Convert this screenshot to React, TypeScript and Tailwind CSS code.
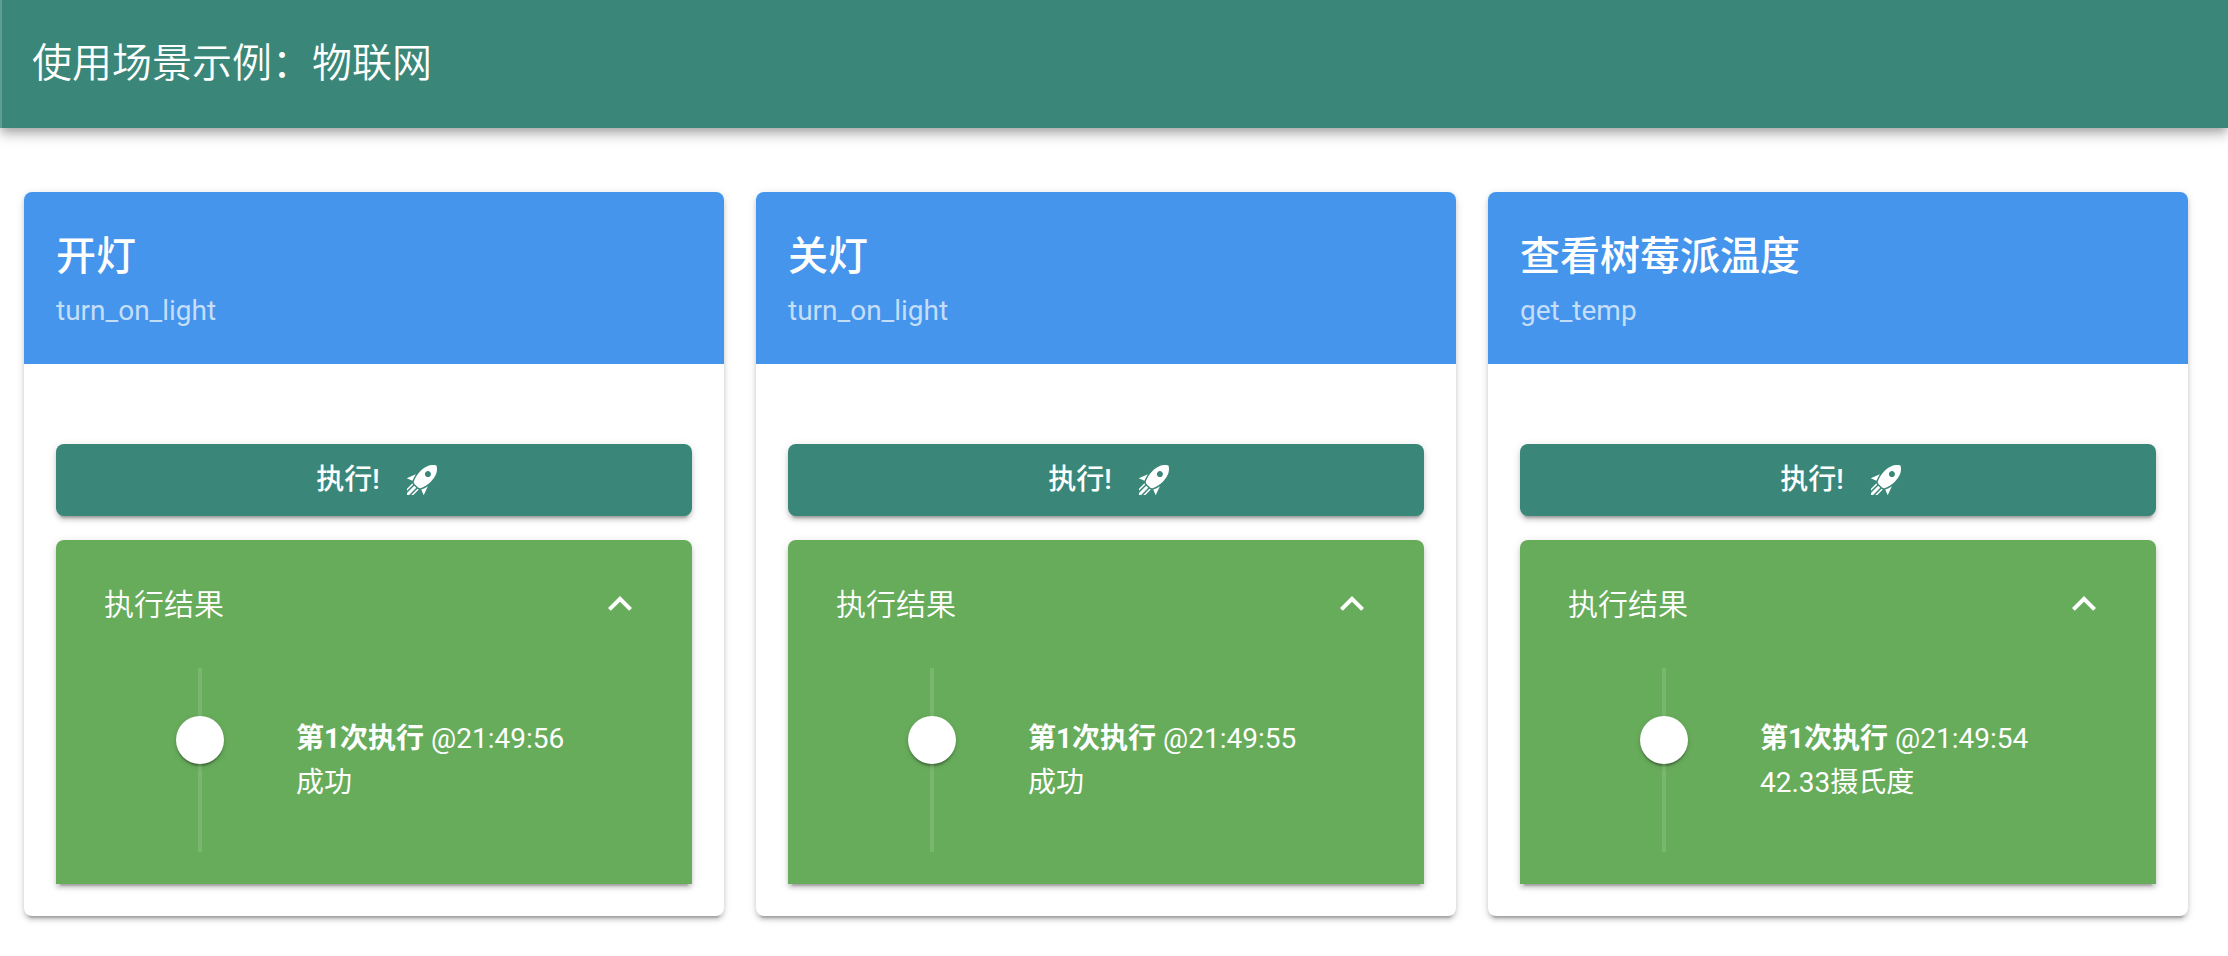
import { useState } from "react";

type Run = { time: string; output: string };
type Device = { title: string; action: string; run: Run };

const devices: Device[] = [
  { title: "开灯", action: "turn_on_light", run: { time: "21:49:56", output: "成功" } },
  { title: "关灯", action: "turn_on_light", run: { time: "21:49:55", output: "成功" } },
  { title: "查看树莓派温度", action: "get_temp", run: { time: "21:49:54", output: "42.33摄氏度" } },
];

function RocketIcon() {
  return (
    <svg viewBox="0 0 24 24" className="-mr-2 size-9 fill-current" aria-hidden="true">
      <path d="M13.13 22.19L11.5 18.36C13.07 17.78 14.54 17 15.9 16.09L13.13 22.19M5.64 12.5L1.81 10.87L7.91 8.1C7 9.46 6.22 10.93 5.64 12.5M21.61 2.39C21.61 2.39 16.66 .269 11 5.93C8.81 8.12 7.5 10.53 6.65 12.64C6.37 13.39 6.56 14.21 7.11 14.77L9.24 16.89C9.79 17.45 10.61 17.63 11.36 17.35C13.5 16.53 15.88 15.19 18.07 13C23.73 7.34 21.61 2.39 21.61 2.39M14.54 9.46C13.76 8.68 13.76 7.41 14.54 6.63S16.59 5.85 17.37 6.63C18.14 7.41 18.15 8.68 17.37 9.46C16.59 10.24 15.32 10.24 14.54 9.46M8.88 16.53L7.47 15.12L8.88 16.53M6.24 22L9.88 18.36C9.54 18.27 9.21 18.12 8.91 17.91L4.83 22H6.24M2 22H3.41L8.18 17.24L6.76 15.83L2 20.59V22M2 19.17L6.09 15.09C5.88 14.79 5.73 14.47 5.64 14.12L2 17.76V19.17Z" />
    </svg>
  );
}

function ChevronIcon({ open }: { open: boolean }) {
  return (
    <svg viewBox="0 0 24 24" className={open ? "size-12 rotate-180 fill-current" : "size-12 fill-current"} aria-hidden="true">
      <path d="M7.41,8.58L12,13.17L16.59,8.58L18,10L12,16L6,10L7.41,8.58Z" />
    </svg>
  );
}

function Results({ run }: { run: Run }) {
  const [open, setOpen] = useState(true);
  return (
    <section className="mt-6 rounded-t-lg bg-[#67ac5b] text-white shadow-[0_6px_2px_-4px_rgba(0,0,0,0.2),0_4px_4px_0_rgba(0,0,0,0.14),0_2px_10px_0_rgba(0,0,0,0.12)]">
      <button
        type="button"
        aria-expanded={open}
        onClick={() => setOpen(!open)}
        className="flex h-32 w-full items-center justify-between px-12 text-[30px] font-[350]"
      >
        执行结果
        <ChevronIcon open={open} />
      </button>
      {open && (
        <div className="px-12 pb-8">
          <ol>
            <li className="flex">
              <div className="flex w-48 flex-col items-center">
                <span className="h-12 w-1 bg-white/12" />
                <span className="size-12 rounded-full bg-white shadow-[0_4px_2px_-2px_rgba(0,0,0,0.2),0_2px_2px_0_rgba(0,0,0,0.14),0_2px_6px_0_rgba(0,0,0,0.12)]" />
                <span className="w-1 grow bg-white/12" />
              </div>
              <div className="pt-[49px] pb-[47px] text-[28px] leading-11">
                <p>
                  <strong className="font-bold">第1次执行</strong> @{run.time}
                </p>
                <p>{run.output}</p>
              </div>
            </li>
          </ol>
        </div>
      )}
    </section>
  );
}

function DeviceCard({ device }: { device: Device }) {
  return (
    <article className="rounded-lg bg-white shadow-[0_6px_2px_-4px_rgba(0,0,0,0.2),0_4px_4px_0_rgba(0,0,0,0.14),0_2px_10px_0_rgba(0,0,0,0.12)]">
      <header className="rounded-t-lg bg-[#4595ec] px-8 pt-[33px] pb-[31px] text-white">
        <h2 className="text-[40px] leading-16 font-medium">{device.title}</h2>
        <p className="text-[28px] leading-11 text-white/70">{device.action}</p>
      </header>
      <div className="px-8 pt-20 pb-8">
        <button
          type="button"
          className="flex h-18 w-full items-center justify-center gap-6 rounded-lg bg-[#3a8779] text-[28px] font-medium text-white shadow-[0_6px_2px_-4px_rgba(0,0,0,0.2),0_4px_4px_0_rgba(0,0,0,0.14),0_2px_10px_0_rgba(0,0,0,0.12)]"
        >
          执行!
          <RocketIcon />
        </button>
        <Results run={device.run} />
      </div>
    </article>
  );
}

export default function App() {
  return (
    <div className="min-h-screen bg-white font-[Roboto,'Noto_Sans_CJK_SC',sans-serif]">
      <header className="flex h-32 items-center border-l-2 border-[#5f9c91] bg-[#3a8779] px-[30px] text-white shadow-[0_4px_8px_-2px_rgba(0,0,0,0.2),0_8px_10px_0_rgba(0,0,0,0.14),0_2px_20px_0_rgba(0,0,0,0.12)]">
        <h1 className="text-[40px] font-[350]">使用场景示例：物联网</h1>
      </header>
      <main className="grid grid-cols-3 gap-8 pt-16 pr-10 pb-10 pl-6">
        {devices.map((device) => (
          <DeviceCard key={device.title} device={device} />
        ))}
      </main>
    </div>
  );
}
